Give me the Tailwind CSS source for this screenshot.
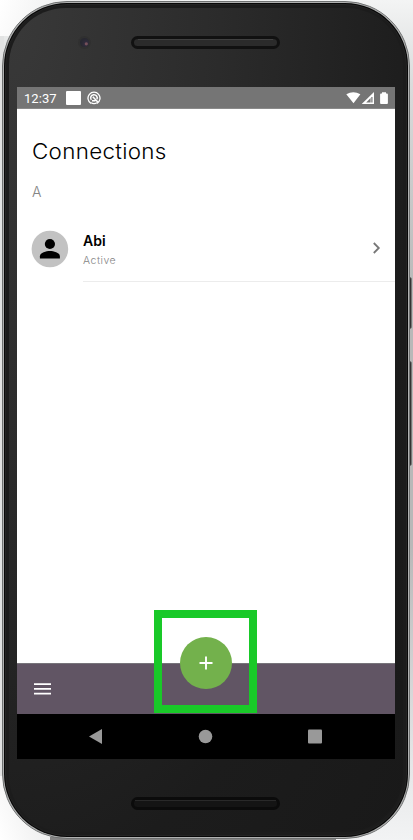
<!DOCTYPE html>
<html lang="en">
<head>
<meta charset="utf-8">
<title>Connections</title>
<script src="https://cdn.jsdelivr.net/npm/@tailwindcss/browser@4"></script>
</head>
<body class="relative h-[840px] w-[413px] overflow-hidden bg-[linear-gradient(180deg,#f3f4f4_0%,#dadcdc_10%,#b8b8b8_35%,#b8b8b8_65%,#e4e5e6_90%,#f2f3f4_100%)] pt-px pl-[2px] font-['Inter',sans-serif]">
<!-- Ambient light and shadow around the handset -->
<div class="absolute top-0 left-0 h-9 w-20 bg-[linear-gradient(110deg,#ffffff,#e8e8e8)]"></div>
<div class="absolute top-[36px] left-0 h-[740px] w-1 bg-[#e2e3e3]"></div>
<div class="absolute bottom-0 left-0 h-16 w-20 bg-[linear-gradient(70deg,#ffffff,#dddddd)]"></div>
<div class="absolute bottom-0 left-[50px] h-[3px] w-[286px] bg-[#858585]"></div>
<!-- Side keys -->
<div class="absolute top-[277px] left-[409px] h-[52px] w-[3px] rounded-r-sm border-r border-[#777] bg-[#333]"></div>
<div class="absolute top-[361px] left-[409px] h-[105px] w-[3px] rounded-r-sm border-r border-[#777] bg-[#333]"></div>

<div class="relative h-[838px] w-[408px] rounded-[65px] border border-[#707272] bg-[#b0b1b1] p-px">
  <div class="h-full rounded-[63px] bg-[#080808] p-px">
    <div class="h-full rounded-[62px] border border-[#242424] bg-[#1c1c1c] p-[3px]">
      <div class="flex h-full flex-col rounded-[57px] bg-[radial-gradient(ellipse_at_0%_0%,#393939_0%,#2b2b2b_38%,#1c1c1c_75%,#191919_100%)] px-[8px]">
        <header class="relative h-[79px] shrink-0">
          <div class="absolute top-[28px] left-[61px] h-[13px] w-[13px] rounded-full border-2 border-[#303030] bg-[radial-gradient(circle_at_70%_65%,#75505a_0_1px,#302b3c_2px,#282831_5px)]"></div>
          <div class="absolute top-[28px] left-[114px] h-[13px] w-[149px] rounded-full border-[3px] border-[#111] bg-[#2b2b2b]"><div class="mx-1 h-px bg-[#404040]"></div></div>
        </header>
        <main class="relative flex h-[672px] w-[378px] shrink-0 flex-col bg-white">
          <div class="flex h-[22px] items-center border-b border-[#8a8a8a] bg-[#757575] pl-[7px] text-white">
            <span class="w-[42px] pt-px font-['Roboto',sans-serif] text-[13px] leading-[21px] tracking-[0.05px]">12:37</span>
            <span class="h-[14px] w-[15px] rounded-[1px] bg-white"></span>
            <svg class="ml-[6px] h-[14px] w-[14px]" viewBox="0 0 14 14" fill="none" stroke="#fff"><path d="M4 12.4A6 6 0 1 1 10 12.4M4 11.8q3 1.8 6 0" stroke-width="1.3"/><path d="M4.3 8.9A3.3 3.3 0 1 1 10 8.2M5.8 5.7l5.2 5.6M5 9.7l3.4.1" stroke-width="1.5"/></svg>
            <svg class="ml-auto h-[14px] w-[49px]" viewBox="0 0 49 14" fill="#fff"><path d="M.3 3.2Q7.3-.9 14.4 3.2L7.5 12.3ZM15.7 13H28V1ZM20.2 11.5 24.6 7v4.5Z" fill-rule="evenodd"/><rect x="25.3" y="6" width="1.2" height="5.5" fill="#757575"/><path d="M36 1.2h4v1.3h1q.9 0 .9.9v8.7q0 .9-.9.9h-6q-.9 0-.9-.9V3.4q0-.9.9-.9h1z"/></svg>
          </div>
          <section class="h-[554px] pl-[15px]">
            <h1 class="w-max origin-left scale-x-[1.065] pt-[29px] text-[21px] leading-[28px] font-light tracking-[0.3px] text-black">Connections</h1>
            <h2 class="mt-[17px] text-[14px] leading-[18px] font-light text-[#858585]">A</h2>
            <div class="mt-[30px] flex h-[51px]">
              <div class="h-[37px] w-[37px]"><svg class="h-[37px] w-[37px] overflow-visible" viewBox="0 0 37 37"><circle cx="17.9" cy="18" r="18.3" fill="#c2c2c2"/><circle cx="17.9" cy="13" r="5.1"/><path d="M7.9 27.5v-2.3c0-3.4 6.3-5.2 10-5.2s10 1.8 10 5.2v2.3z"/></svg></div>
              <div class="ml-[14px] flex flex-1 border-b border-[#ececec]">
                <div class="pt-px"><div class="text-[14px] leading-[17px] font-semibold text-black">Abi</div><div class="mt-[5px] text-[10.5px] leading-[14px] font-light tracking-[0.5px] text-[#858585]">Active</div></div>
                <svg class="mt-[11px] mr-[14px] ml-auto h-[12px] w-[9px]" viewBox="0 0 9 12" fill="none" stroke="#777" stroke-width="1.8"><path d="m1.8 1 5 5-5 5"/></svg>
              </div>
            </div>
          </section>
          <nav class="flex h-[51px] items-center border-t border-[#77747a] bg-[#615564] pl-[17px]">
            <svg class="h-[12px] w-[17px]" viewBox="0 0 17 12" fill="#fff"><path d="M0 .3h17v1.7H0zM0 5h17v1.7H0zM0 9.7h17v1.7H0z"/></svg>
          </nav>
          <footer class="flex h-[45px] bg-black">
            <svg class="h-[45px] w-[378px]" viewBox="0 0 378 45" fill="#999"><path d="M72 22.5 85 15v15z"/><circle cx="188.5" cy="22.5" r="6.8"/><rect x="291" y="15.5" width="14" height="14" rx="1"/></svg>
          </footer>
          <!-- Add action and highlight -->
          <div class="absolute top-[523px] left-[137px] flex h-[103px] w-[103px] items-center justify-center border-8 border-[#19c928] pt-[3px]">
            <button class="flex h-[52px] w-[52px] items-center justify-center rounded-full bg-[#73b14c]" aria-label="Add"><svg class="h-[14px] w-[14px]" viewBox="0 0 14 14" stroke="#fff" stroke-width="1.9"><path d="M7 .5v13M.5 7h13"/></svg></button>
          </div>
        </main>
        <div class="relative flex-1"><div class="absolute top-[38px] left-[114px] h-[13px] w-[149px] rounded-full border-[3px] border-[#0b0b0b] bg-[#141414]"><div class="mx-px h-px bg-[#292929]"></div></div></div>
      </div>
    </div>
  </div>
</div>
</body>
</html>
